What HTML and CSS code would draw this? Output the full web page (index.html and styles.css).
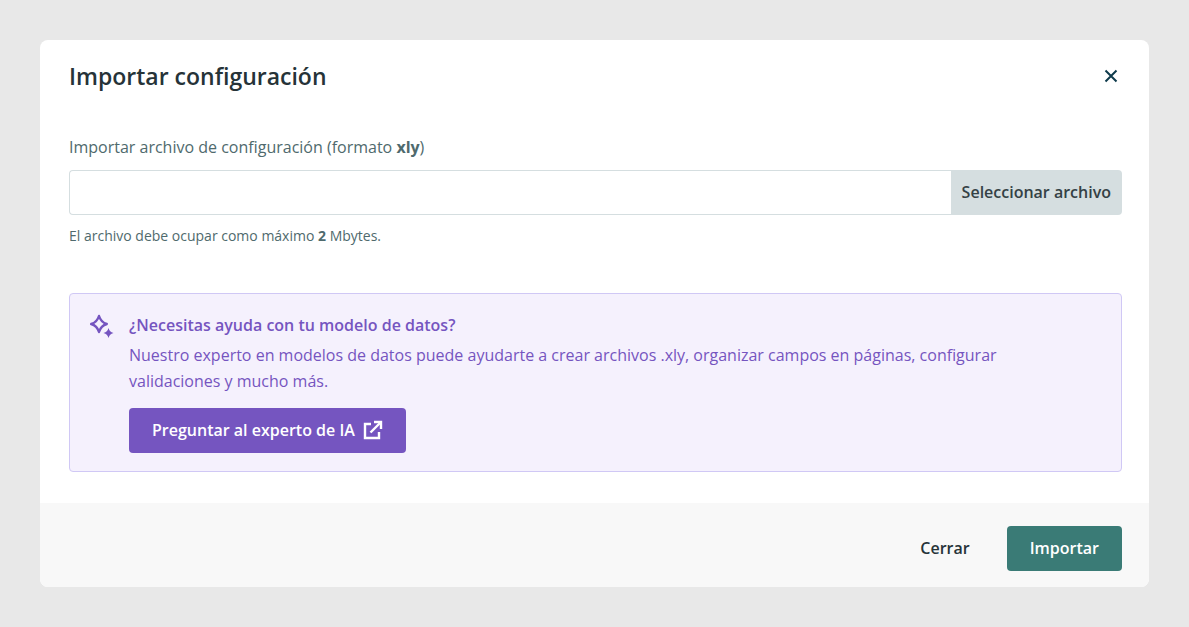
FILE: index.html
```html
<!DOCTYPE html>
<html lang="es">
<head>
    <meta charset="UTF-8">
    <meta name="viewport" content="width=device-width, initial-scale=1.0">
    <title>Importar configuración</title>
    <link rel="stylesheet" href="styles.css">
</head>
<body>

    <div class="modal" role="dialog" aria-labelledby="modal-title">
        <!-- Header -->
        <div class="modal-header">
            <h1 id="modal-title">Importar configuración</h1>
            <button type="button" class="close-button" aria-label="Cerrar ventana">
                <svg width="14" height="14" viewBox="0 0 14 14" fill="none" stroke="currentColor" stroke-width="2">
                    <path d="M1.500 1.500l11 11M12.500 1.500l-11 11"/>
                </svg>
            </button>
        </div>

        <!-- Body -->
        <div class="modal-body">
            <label class="file-label" for="config-file">Importar archivo de configuración (formato <strong>xly</strong>)</label>
            <div class="file-group">
                <input type="text" id="config-file" class="file-input" aria-describedby="file-hint" readonly>
                <button type="button" class="file-button">Seleccionar archivo</button>
            </div>
            <p class="file-hint" id="file-hint">El archivo debe ocupar como máximo <strong>2</strong> Mbytes.</p>

            <div class="help-box">
                <svg class="help-icon" width="24" height="24" viewBox="0 0 24 24">
                    <path d="M9 2C10.400 6.600 12.200 8.600 16.800 10C12.200 11.400 10.400 13.400 9 18C7.600 13.400 5.800 11.400 1.200 10C5.800 8.600 7.600 6.600 9 2Z" fill="none" stroke="currentColor" stroke-width="2.400" stroke-linejoin="round"/>
                    <path d="M18.500 14C19.500 17 20.500 18 23.500 19C20.500 20 19.500 21 18.500 24C17.500 21 16.500 20 13.500 19C16.500 18 17.500 17 18.500 14Z" fill="currentColor"/>
                </svg>
                <div class="help-content">
                    <h2>¿Necesitas ayuda con tu modelo de datos?</h2>
                    <p>Nuestro experto en modelos de datos puede ayudarte a crear archivos .xly, organizar campos en páginas, configurar validaciones y mucho más.</p>
                    <a href="#" class="button button-ai">
                        Preguntar al experto de IA
                        <svg width="20" height="20" viewBox="0 0 20 20" fill="none" stroke="currentColor" stroke-width="2.400">
                            <path d="M8 4H2v14h14v-6"/>
                            <path d="M7.500 12.500L18 2"/>
                            <path d="M11 2h7v7"/>
                        </svg>
                    </a>
                </div>
            </div>
        </div>

        <!-- Footer -->
        <div class="modal-footer">
            <button type="button" class="button button-link">Cerrar</button>
            <button type="button" class="button button-primary">Importar</button>
        </div>
    </div>

</body>
</html>
```
FILE: styles.css
```css
* {
    box-sizing: border-box;
}

body {
    margin: 0;
    padding: 40px;
    background-color: #e8e8e8;
    color: #4f6a6d;
    font-family: 'Open Sans', sans-serif;
    font-size: 16px;
    line-height: 26px;
}

h1, h2, p {
    margin: 0;
}

button, input {
    font: inherit;
}

button {
    cursor: pointer;
}

.modal {
    background-color: #fff;
    border-radius: 8px;
    overflow: hidden;
}

.modal-header {
    display: flex;
    align-items: center;
    justify-content: space-between;
    padding: 20px 27px 20px 29px;
}

.modal-header h1 {
    color: #263338;
    font-size: 23px;
    font-weight: 600;
    line-height: 32px;
}

.close-button {
    display: flex;
    padding: 4px;
    border: none;
    background: none;
    color: #0f3b4c;
}

.modal-body {
    padding: 22px 27px 31px 29px;
}

.file-label {
    display: block;
    margin-bottom: 10px;
}

.file-group {
    display: flex;
    height: 45px;
}

.file-input {
    flex: 1;
    min-width: 0;
    padding: 0 12px;
    border: 1px solid #d5dee0;
    border-right: none;
    border-radius: 4px 0 0 4px;
    background-color: #fff;
}

.file-button {
    padding: 0 11px 2px;
    border: none;
    border-radius: 0 4px 4px 0;
    background-color: #d5dee0;
    color: #344145;
    font-weight: 600;
}

.file-hint {
    margin-top: 8px;
    font-size: 14px;
}

.help-box {
    display: flex;
    gap: 15px;
    margin-top: 44px;
    padding: 18px 20px;
    border: 1px solid #d0c8f5;
    border-radius: 4px;
    background-color: #f5f1fd;
    color: #7555c0;
}

.help-icon {
    flex-shrink: 0;
    margin-top: 2px;
}

.help-content {
    padding-right: 60px;
}

.help-content h2 {
    margin-bottom: 4px;
    font-size: 16px;
    font-weight: 600;
}

.help-content p {
    margin-bottom: 14px;
}

.button {
    display: inline-flex;
    align-items: center;
    height: 45px;
    padding: 0 23px 2px;
    border: none;
    border-radius: 4px;
    font-weight: 600;
    text-decoration: none;
}

.button-ai {
    gap: 8px;
    background-color: #7555c0;
    color: #fff;
    vertical-align: top;
}

.button-primary {
    background-color: #3a7b76;
    color: #fff;
}

.button-link {
    background: none;
    color: #263338;
}

.modal-footer {
    display: flex;
    justify-content: flex-end;
    gap: 14px;
    padding: 23px 27px 16px;
    background-color: #f8f8f8;
}
```
